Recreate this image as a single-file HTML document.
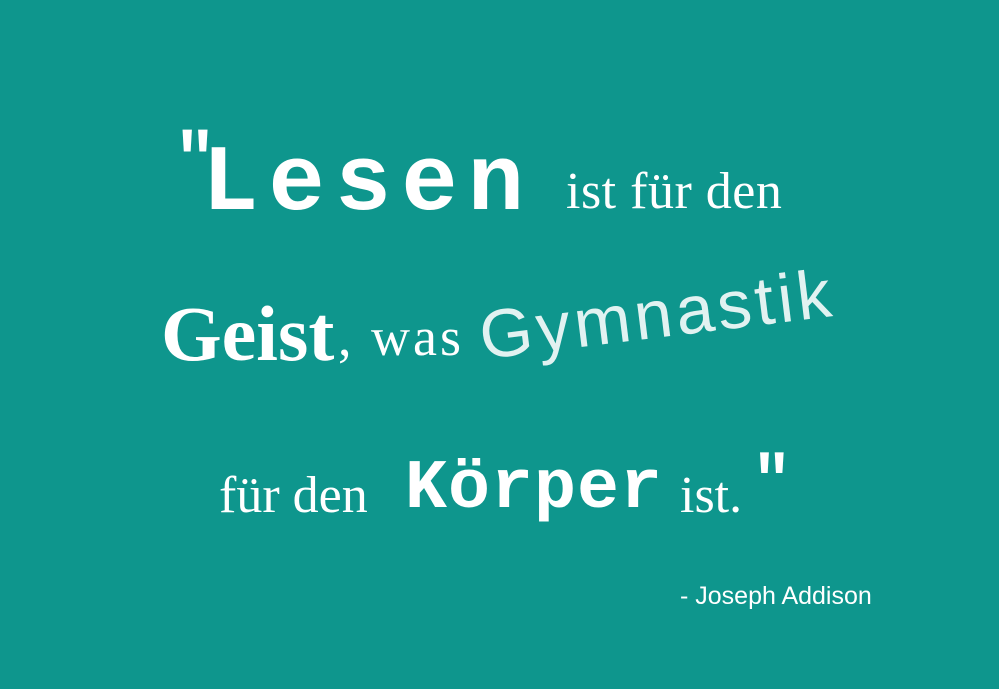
<!DOCTYPE html>
<html><head><meta charset="utf-8"><style>
html,body{margin:0;padding:0}
body{width:999px;height:689px;background:#0e968d;position:relative;overflow:hidden;color:#fff}
.t{position:absolute;white-space:nowrap;line-height:1}
.mono{font-family:"Liberation Mono",monospace;font-weight:bold}
.serif{font-family:"Liberation Serif",serif}
.sans{font-family:"Liberation Sans",sans-serif}
</style></head><body>
<div class="t mono" style="left:174px;top:128px;font-size:70px">"</div>
<div class="t mono" style="left:202px;top:138px;font-size:94px;letter-spacing:10px">Lesen</div>
<div class="t serif" style="left:566px;top:166px;font-size:52px;letter-spacing:0.5px">ist für den</div>
<div class="t serif" style="left:161px;top:295px;font-size:78px;font-weight:bold">Geist</div>
<div class="t serif" style="left:338px;top:310px;font-size:54px;letter-spacing:3px">, was</div>
<div class="t sans" style="left:484px;top:302px;font-size:68px;opacity:.88;transform:rotate(-7deg);transform-origin:0 100%;letter-spacing:4px">Gymnastik</div>
<div class="t serif" style="left:219px;top:470px;font-size:52px">für den</div>
<div class="t mono" style="left:405px;top:455px;font-size:70px;letter-spacing:1px">Körper</div>
<div class="t serif" style="left:680px;top:470px;font-size:52px">ist.</div>
<div class="t mono" style="left:752px;top:450px;font-size:66px">"</div>
<div class="t sans" style="left:680px;top:584px;font-size:25px">- Joseph Addison</div>
</body></html>
